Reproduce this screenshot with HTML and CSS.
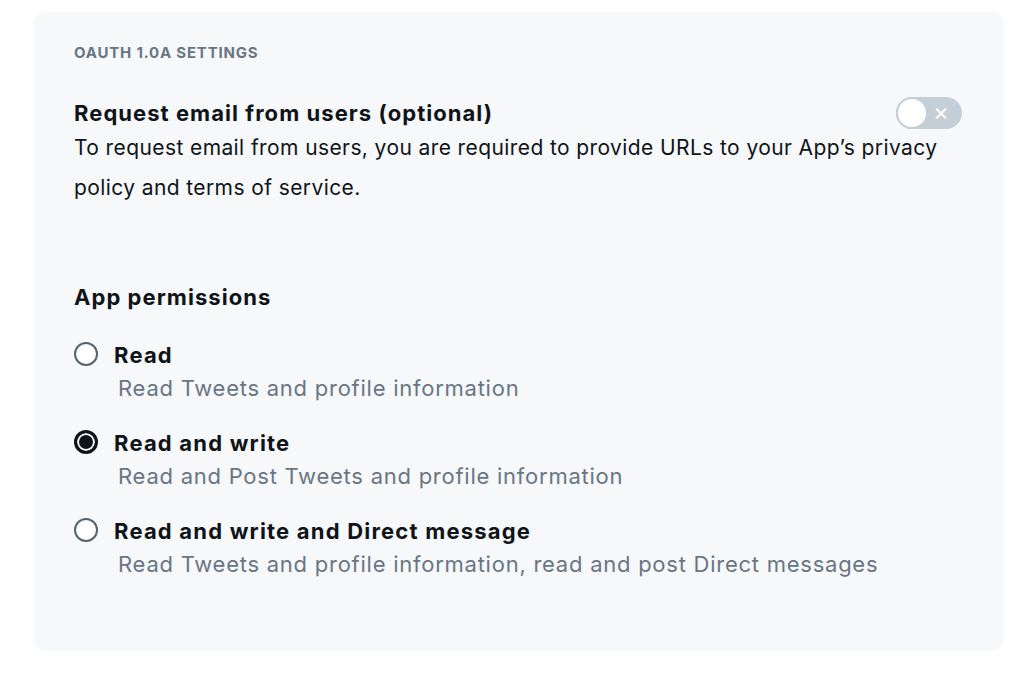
FILE: index.html
```html
<!DOCTYPE html>
<html>
<head>
<meta charset="utf-8">
<link rel="stylesheet" href="styles.css">
</head>
<body>
<section class="card">
  <h3 class="eyebrow">OAUTH 1.0A SETTINGS</h3>
  <div class="setting">
    <div class="setting-head">
      <span class="setting-title">Request email from users (optional)</span>
      <span class="toggle"><span class="knob"></span><span class="x">×</span></span>
    </div>
    <p class="setting-desc">To request email from users, you are required to provide URLs to your App’s privacy policy and terms of service.</p>
  </div>
  <h4 class="group-title">App permissions</h4>
  <div class="options">
    <div class="option">
      <span class="radio"></span>
      <div class="option-text">
        <div class="option-label">Read</div>
        <div class="option-desc">Read Tweets and profile information</div>
      </div>
    </div>
    <div class="option">
      <span class="radio checked"></span>
      <div class="option-text">
        <div class="option-label">Read and write</div>
        <div class="option-desc">Read and Post Tweets and profile information</div>
      </div>
    </div>
    <div class="option">
      <span class="radio"></span>
      <div class="option-text">
        <div class="option-label">Read and write and Direct message</div>
        <div class="option-desc">Read Tweets and profile information, read and post Direct messages</div>
      </div>
    </div>
  </div>
</section>
</body>
</html>
```

FILE: styles.css
```css
html, body {
  margin: 0;
  padding: 0;
  background: #ffffff;
}
body {
  font-family: Inter, "Helvetica Neue", Arial, sans-serif;
  color: #0f1419;
  padding: 12px 20px 0 34px;
}
.card {
  width: 970px;
  height: 639px;
  box-sizing: border-box;
  background: #f7f8fa;
  border-radius: 12px;
  padding: 33px 40px 0 40px;
}
.eyebrow {
  margin: 0;
  font-size: 15px;
  font-weight: 700;
  color: #687684;
  line-height: 16px;
  letter-spacing: 0.8px;
}
.setting {
  margin-top: 37px;
}
.setting-head {
  display: flex;
  justify-content: space-between;
  align-items: center;
  height: 30px;
}
.setting-title {
  font-size: 22px;
  font-weight: 700;
  letter-spacing: 1.05px;
  color: #0f1419;
}
.toggle {
  position: relative;
  width: 66px;
  height: 32px;
  border-radius: 16px;
  background: #c4cfd8;
  margin-right: 2px;
}
.knob {
  position: absolute;
  left: 0;
  top: 0;
  width: 28px;
  height: 28px;
  border-radius: 50%;
  background: #ffffff;
  border: 2px solid #c4cfd8;
}
.x {
  position: absolute;
  left: 37px;
  top: 2px;
  color: #ffffff;
  font-size: 24px;
  line-height: 26px;
  font-weight: 400;
}
.setting-desc {
  margin: 0;
  font-size: 21px;
  line-height: 40px;
  letter-spacing: 0.4px;
  color: #0f1419;
}
.group-title {
  margin: 74px 0 0 0;
  font-size: 22px;
  font-weight: 700;
  line-height: 30px;
  letter-spacing: 1.05px;
}
.options {
  margin-top: 31px;
  display: flex;
  flex-direction: column;
  gap: 29px;
}
.option {
  display: flex;
  align-items: flex-start;
  gap: 16px;
}
.radio {
  width: 20px;
  height: 20px;
  border: 2px solid #536471;
  border-radius: 50%;
  background: #fff;
  margin-top: -1px;
  flex: none;
}
.radio.checked {
  border: 3px solid #0f1419;
  width: 18px;
  height: 18px;
  background: #0f1419;
  box-shadow: inset 0 0 0 2px #fff;
}
.option-label {
  font-size: 22px;
  font-weight: 700;
  line-height: 24px;
  letter-spacing: 1.2px;
}
.option-desc {
  margin-top: 7px;
  margin-left: 4px;
  font-size: 22px;
  line-height: 28px;
  color: #687684;
  letter-spacing: 0.75px;
}
```
